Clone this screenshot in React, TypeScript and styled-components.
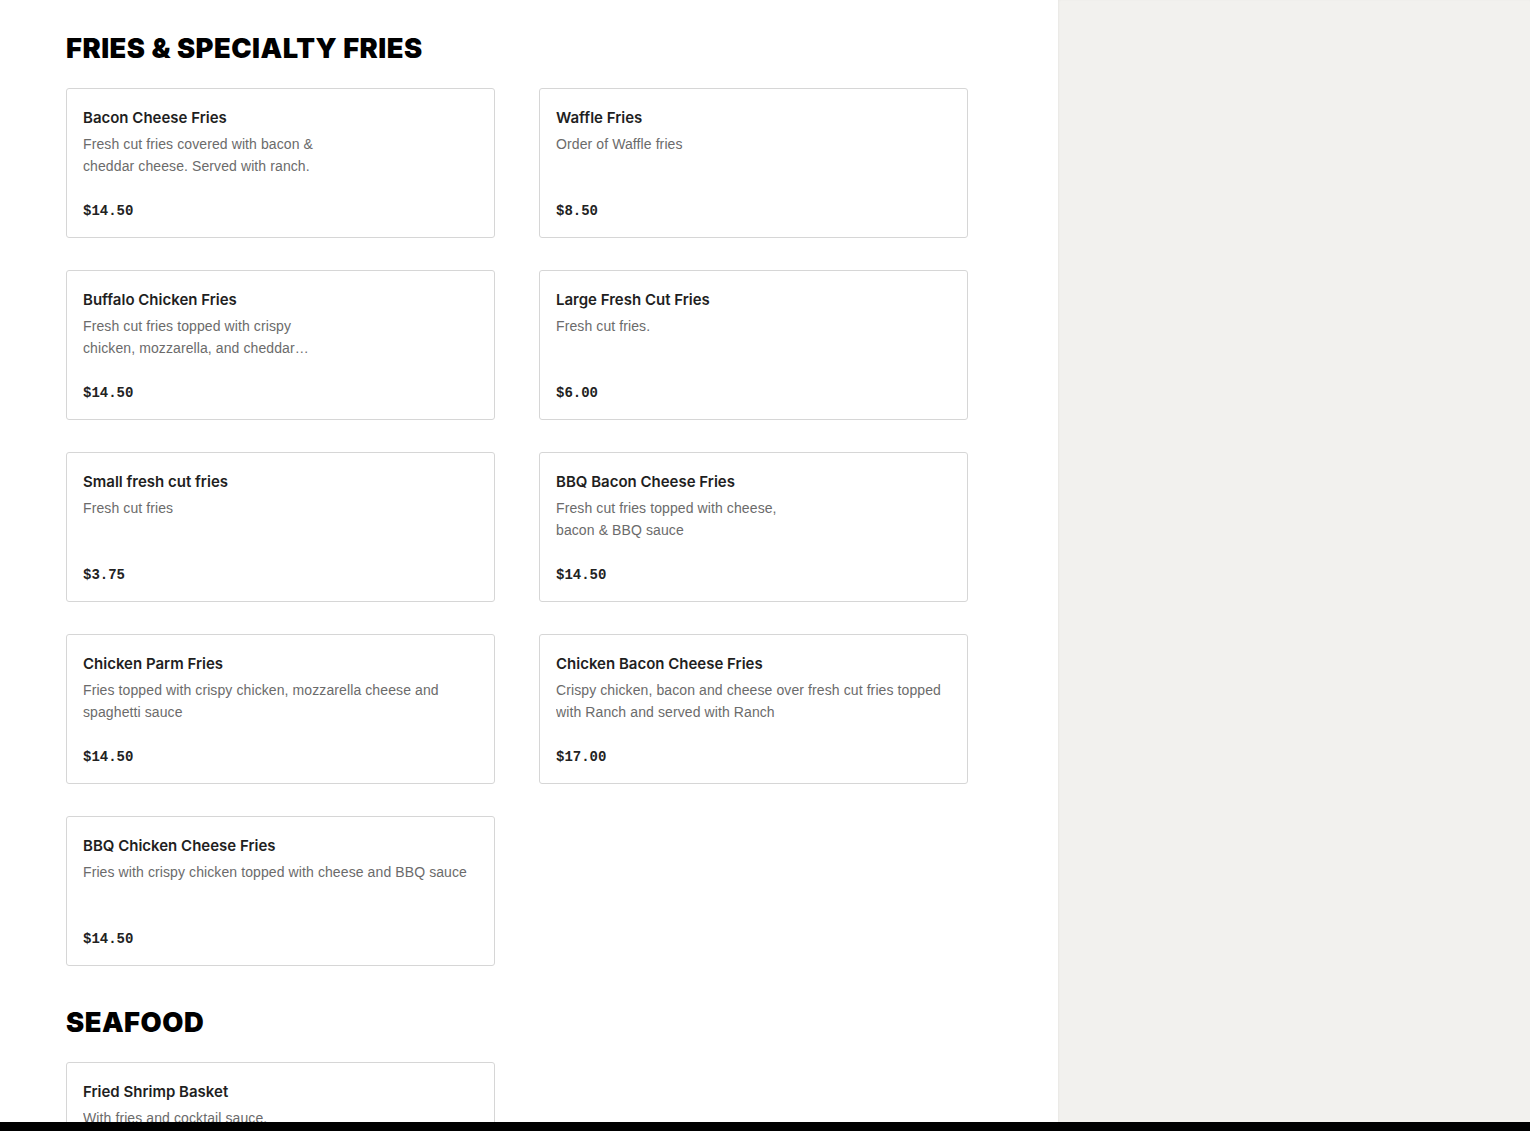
import { FC } from 'react';
import styled, { createGlobalStyle } from 'styled-components';

type Item = {
  name: string;
  description: string;
  price: string;
  narrow?: boolean;
};

type Section = {
  title: string;
  items: Item[];
};

const sections: Section[] = [
  {
    title: 'Fries & Specialty Fries',
    items: [
      {
        name: 'Bacon Cheese Fries',
        description: 'Fresh cut fries covered with bacon & cheddar cheese. Served with ranch.',
        price: '$14.50',
        narrow: true,
      },
      { name: 'Waffle Fries', description: 'Order of Waffle fries', price: '$8.50' },
      {
        name: 'Buffalo Chicken Fries',
        description:
          'Fresh cut fries topped with crispy chicken, mozzarella, and cheddar cheese, buffalo sauce and ranch.',
        price: '$14.50',
        narrow: true,
      },
      { name: 'Large Fresh Cut Fries', description: 'Fresh cut fries.', price: '$6.00' },
      { name: 'Small fresh cut fries', description: 'Fresh cut fries', price: '$3.75' },
      {
        name: 'BBQ Bacon Cheese Fries',
        description: 'Fresh cut fries topped with cheese, bacon & BBQ sauce',
        price: '$14.50',
        narrow: true,
      },
      {
        name: 'Chicken Parm Fries',
        description: 'Fries topped with crispy chicken, mozzarella cheese and spaghetti sauce',
        price: '$14.50',
      },
      {
        name: 'Chicken Bacon Cheese Fries',
        description:
          'Crispy chicken, bacon and cheese over fresh cut fries topped with Ranch and served with Ranch',
        price: '$17.00',
      },
      {
        name: 'BBQ Chicken Cheese Fries',
        description: 'Fries with crispy chicken topped with cheese and BBQ sauce',
        price: '$14.50',
      },
    ],
  },
  {
    title: 'Seafood',
    items: [
      {
        name: 'Fried Shrimp Basket',
        description: 'With fries and cocktail sauce.',
        price: '$16.00',
      },
    ],
  },
];

const MenuCard: FC<{ item: Item }> = ({ item }) => (
  <Card>
    <ItemName>{item.name}</ItemName>
    <Description $narrow={item.narrow}>{item.description}</Description>
    <Price>{item.price}</Price>
  </Card>
);

export default function App() {
  return (
    <>
      <GlobalStyle />
      <Layout>
        <Main>
          {sections.map((section) => (
            <MenuSection key={section.title}>
              <SectionTitle>{section.title}</SectionTitle>
              <CardGrid>
                {section.items.map((item) => (
                  <MenuCard key={item.name} item={item} />
                ))}
              </CardGrid>
            </MenuSection>
          ))}
        </Main>
        <Aside />
      </Layout>
      <BottomBar />
    </>
  );
}

const GlobalStyle = createGlobalStyle`
  html, body {
    margin: 0;
    padding: 0;
    background: #ffffff;
    font-family: 'Liberation Sans', Arial, sans-serif;
    color: #191919;
  }
  body {
    overflow: hidden;
  }
`;

const Layout = styled.div`
  display: flex;
  height: 1131px;
  overflow: hidden;
`;

const Main = styled.main`
  width: 1058px;
  flex-shrink: 0;
  box-sizing: border-box;
  padding: 33px 90px 0 66px;
  background: #ffffff;
`;

const Aside = styled.aside`
  flex: 1;
  background: #f2f1ee;
  box-shadow: inset 1px 0 2px rgba(0, 0, 0, 0.04);
`;

const MenuSection = styled.section`
  margin-bottom: 41px;
`;

const SectionTitle = styled.h2`
  margin: 0 0 23px;
  font-family: 'Inter', 'Liberation Sans', sans-serif;
  font-weight: 900;
  font-size: 27.3px;
  line-height: 32px;
  letter-spacing: 0.5px;
  text-transform: uppercase;
  color: #000000;
`;

const CardGrid = styled.div`
  display: grid;
  grid-template-columns: 429px 429px;
  column-gap: 44px;
  row-gap: 32px;
`;

const Card = styled.div`
  box-sizing: border-box;
  height: 150px;
  display: flex;
  flex-direction: column;
  padding: 17px 16px 16px;
  border: 1px solid #d6d6d6;
  border-radius: 3px;
  background: #ffffff;
`;

const ItemName = styled.div`
  font-family: 'Inter', 'Liberation Sans', sans-serif;
  font-size: 15px;
  line-height: 24px;
  font-weight: 600;
  color: #1f1f1f;
`;

const Description = styled.div<{ $narrow?: boolean }>`
  margin-top: 3px;
  max-width: ${(p) => (p.$narrow ? '250px' : 'none')};
  font-size: 14px;
  line-height: 22px;
  letter-spacing: 0.1px;
  color: #6b6b6b;
  display: -webkit-box;
  -webkit-line-clamp: 2;
  -webkit-box-orient: vertical;
  overflow: hidden;
`;

const Price = styled.div`
  margin-top: auto;
  font-family: 'Liberation Mono', 'DejaVu Sans Mono', monospace;
  font-size: 14px;
  line-height: 20px;
  font-weight: 700;
  color: #222222;
`;

const BottomBar = styled.div`
  position: fixed;
  left: 0;
  right: 0;
  bottom: 0;
  height: 9px;
  background: #000000;
`;
